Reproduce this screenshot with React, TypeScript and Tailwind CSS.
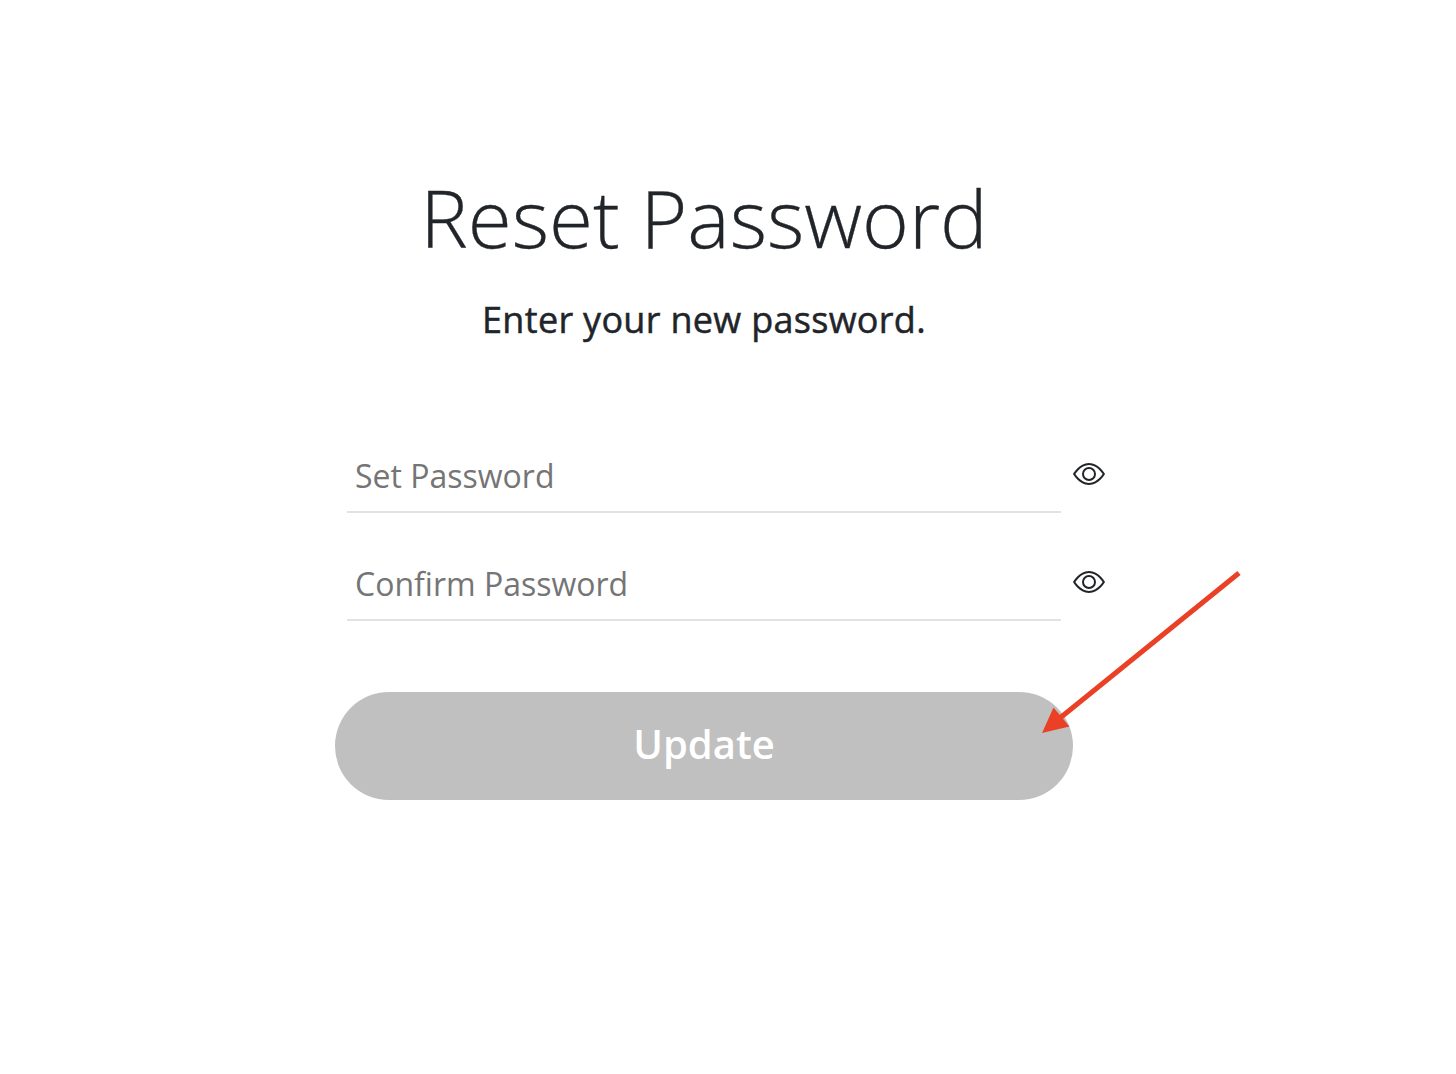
import React from "react";

interface PasswordFieldProps {
  placeholder: string;
}

function EyeIcon() {
  return (
    <svg width="32" height="32" viewBox="0 0 16 16" fill="currentColor">
      <path d="M16 8s-3-5.500-8-5.500S0 8 0 8s3 5.500 8 5.500S16 8 16 8zM1.173 8a13.133 13.133 0 0 1 1.660-2.043C4.120 4.668 5.880 3.500 8 3.500c2.120 0 3.879 1.168 5.168 2.457A13.133 13.133 0 0 1 14.828 8c-.058.087-.122.183-.195.288-.335.480-.830 1.120-1.465 1.755C11.879 11.332 10.119 12.500 8 12.500c-2.120 0-3.879-1.168-5.168-2.457A13.134 13.134 0 0 1 1.172 8z" />
      <path d="M8 5.500a2.500 2.500 0 1 0 0 5 2.500 2.500 0 0 0 0-5zM4.500 8a3.500 3.500 0 1 1 7 0 3.500 3.500 0 0 1-7 0z" />
    </svg>
  );
}

function PasswordField({ placeholder }: PasswordFieldProps) {
  return (
    <div className="flex h-[76px] items-start">
      <input
        type="password"
        placeholder={placeholder}
        className="h-[76px] w-[714px] shrink-0 border-b-2 border-[#e2e2e2] bg-transparent px-2 pt-0.5 text-[32px] text-[#212529] outline-none placeholder:text-[#757575]"
      />
      <button type="button" aria-label="Show password" className="ml-3 mt-[21px] shrink-0">
        <EyeIcon />
      </button>
    </div>
  );
}

export default function App() {
  return (
    <div className="relative h-[1074px] w-[1456px] overflow-hidden bg-white font-['Open_Sans',sans-serif] text-[#212529]">
      <main className="ml-[335px] flex w-[738px] flex-col items-center pt-[169px]">
        <h1 className="whitespace-nowrap text-[80px] font-light leading-[96px] [-webkit-text-stroke:0.3px_#212529]">
          Reset Password
        </h1>
        <p className="mt-[31px] whitespace-nowrap text-[36px] font-medium leading-[48px] tracking-[0.3px] [-webkit-text-stroke:0.5px_#212529]">
          Enter your new password.
        </p>
        <form className="mt-[93px] w-full">
          <div className="flex flex-col gap-8 pl-3">
            <PasswordField placeholder="Set Password" />
            <PasswordField placeholder="Confirm Password" />
          </div>
          <button
            type="button"
            className="mt-[71px] h-[108px] w-full rounded-full bg-[#c0c0c0] pb-1 text-[40px] font-semibold text-white"
          >
            Update
          </button>
        </form>
      </main>
      {/* arrow pointing at the update button */}
      <svg className="pointer-events-none absolute left-0 top-0" width="1456" height="1074">
        <path d="M1239 573 L1060 718" stroke="#ea4025" strokeWidth="5" />
        <path d="M1042 733 L1053.500 707.500 L1069.500 726.500 Z" fill="#ea4025" />
      </svg>
    </div>
  );
}
